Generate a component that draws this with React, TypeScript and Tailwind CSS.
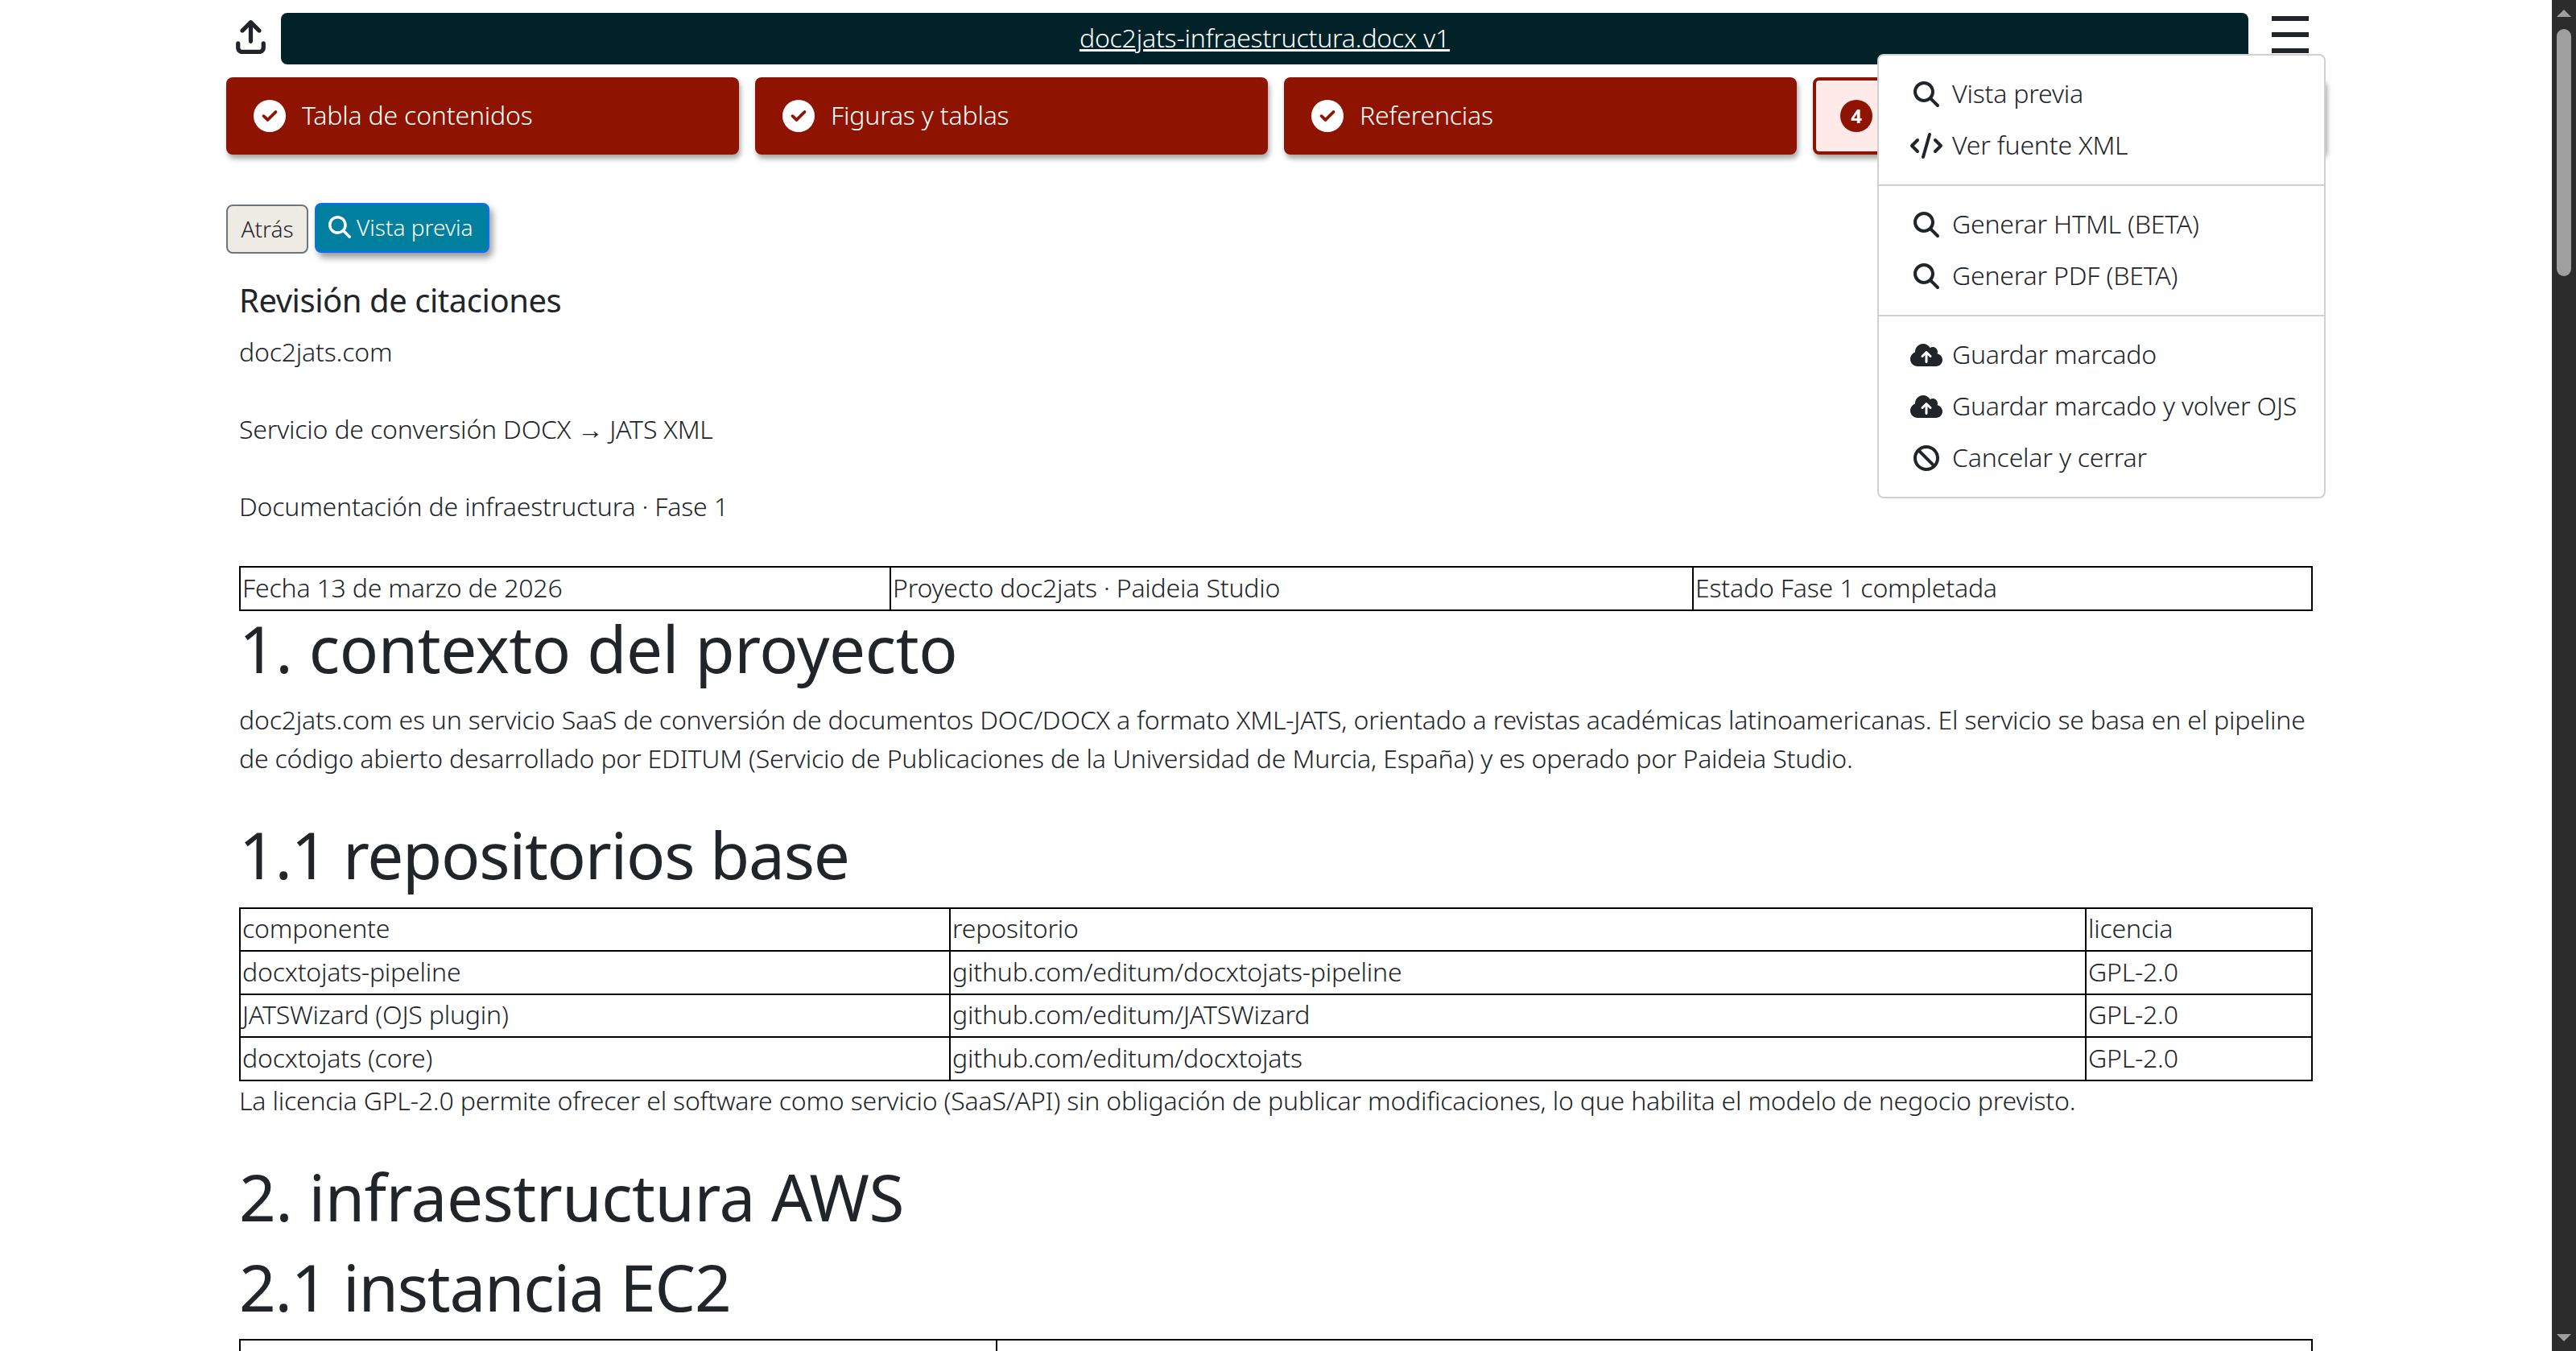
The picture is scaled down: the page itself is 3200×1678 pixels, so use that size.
import type { ReactNode } from 'react';
import {
  FaArrowUpFromBracket,
  FaBan,
  FaCircleCheck,
  FaCloudArrowUp,
  FaCode,
  FaMagnifyingGlass,
} from 'react-icons/fa6';

const steps = ['Tabla de contenidos', 'Figuras y tablas', 'Referencias'];

function StepDone({ label }: { label: string }) {
  return (
    <div className="flex h-24 items-center gap-5 rounded-lg bg-[#8e1300] pl-[34px] text-white shadow-[2px_5px_6px_rgba(0,0,0,0.35)]">
      <FaCircleCheck className="h-10 w-10 shrink-0" />
      <span className="pb-[2px]">{label}</span>
    </div>
  );
}

function MenuItem({ icon, label }: { icon: ReactNode; label: string }) {
  return (
    <div className="flex h-16 items-center gap-3 pl-[39px]">
      <span className="flex h-8 w-10 shrink-0 items-center justify-center">{icon}</span>
      <span className="pb-[2px] whitespace-nowrap">{label}</span>
    </div>
  );
}

function Cell({ width, children }: { width?: string; children?: ReactNode }) {
  return (
    <td className={`h-[53.5px] border-2 border-black px-[2px] pt-0 pb-[2px] align-middle ${width ?? ''}`}>
      {children}
    </td>
  );
}

const repos = [
  ['componente', 'repositorio', 'licencia'],
  ['docxtojats-pipeline', 'github.com/editum/docxtojats-pipeline', 'GPL-2.0'],
  ['JATSWizard (OJS plugin)', 'github.com/editum/JATSWizard', 'GPL-2.0'],
  ['docxtojats (core)', 'github.com/editum/docxtojats', 'GPL-2.0'],
];

export default function App() {
  return (
    <div className="flex h-screen overflow-hidden bg-white font-['Noto_Sans',sans-serif] text-[32px] leading-[48px] font-[350] tracking-[-0.19px] text-[#212529]">
      <main className="min-w-0 flex-1 overflow-hidden">
        <div className="relative mx-auto w-[2608px]">
          {/* top bar */}
          <div className="flex h-20 pt-4">
            <div className="w-[68px] pt-[9px] pl-3">
              <FaArrowUpFromBracket className="h-[42px] w-[37px]" />
            </div>
            <div className="flex h-16 flex-1 items-center justify-center rounded-lg bg-[#022229] pb-[2px] text-white underline">
              doc2jats-infraestructura.docx v1
            </div>
            <div className="flex w-24 flex-col gap-[14px] pt-1 pl-[29px]">
              <div className="h-[6px] w-[46px] bg-[#212529]" />
              <div className="h-[6px] w-[46px] bg-[#212529]" />
              <div className="h-[6px] w-[46px] bg-[#212529]" />
            </div>
          </div>

          {/* steps */}
          <div className="mt-4 grid grid-cols-4 gap-5">
            {steps.map((s) => (
              <StepDone key={s} label={s} />
            ))}
            <div className="flex h-24 items-center rounded-lg border-4 border-[#8e1300] bg-[#ffeaea] pl-[30px] shadow-[2px_5px_6px_rgba(0,0,0,0.35)]">
              <span className="flex h-10 w-10 shrink-0 items-center justify-center rounded-full bg-[#8e1300] text-[24px] font-bold text-white">
                4
              </span>
            </div>
          </div>

          {/* menu */}
          <div className="absolute top-[67px] right-0 z-10 w-[557px] rounded-lg border-2 border-[#d0d0d0] bg-white py-4">
            <MenuItem icon={<FaMagnifyingGlass className="h-8 w-8" />} label="Vista previa" />
            <MenuItem icon={<FaCode className="h-8 w-10" />} label="Ver fuente XML" />
            <div className="my-4 h-[2px] bg-[#d0d0d0]" />
            <MenuItem icon={<FaMagnifyingGlass className="h-8 w-8" />} label="Generar HTML (BETA)" />
            <MenuItem icon={<FaMagnifyingGlass className="h-8 w-8" />} label="Generar PDF (BETA)" />
            <div className="my-4 h-[2px] bg-[#d0d0d0]" />
            <MenuItem icon={<FaCloudArrowUp className="h-8 w-10" />} label="Guardar marcado" />
            <MenuItem icon={<FaCloudArrowUp className="h-8 w-10" />} label="Guardar marcado y volver OJS" />
            <MenuItem icon={<FaBan className="h-8 w-8" />} label="Cancelar y cerrar" />
          </div>

          {/* actions */}
          <div className="mt-[60px] flex items-start gap-2 text-[28px] tracking-normal">
            <button className="mt-[2px] h-[61px] w-[102px] rounded-lg border-2 border-[#6c757d] bg-[#eeebe5] pb-[2px] text-[#212529]">
              Atrás
            </button>
            <button className="flex h-[62px] w-[217px] items-center gap-[7px] rounded-lg border-2 border-[#0d6efd] bg-[#007f9e] pb-[2px] pl-[15px] text-white shadow-[4px_6px_8px_rgba(0,0,0,0.4)]">
              <FaMagnifyingGlass className="h-7 w-7" />
              Vista previa
            </button>
          </div>

          {/* document */}
          <div className="px-4">
            <h5 className="mt-9 mb-[14px] h-12 pb-1 text-[40px] leading-[44px] font-normal tracking-[-0.45px]">
              Revisión de citaciones
            </h5>
            <p className="mb-12">doc2jats.com</p>
            <p className="mb-12">Servicio de conversión DOCX → JATS XML</p>
            <p className="mb-[50px]">Documentación de infraestructura · Fase 1</p>

            <table className="w-full table-fixed border-collapse">
              <tbody>
                <tr>
                  <Cell width="w-[808px]">Fecha 13 de marzo de 2026</Cell>
                  <Cell width="w-[997px]">Proyecto doc2jats · Paideia Studio</Cell>
                  <Cell>Estado Fase 1 completada</Cell>
                </tr>
              </tbody>
            </table>

            <h1 className="mb-4 h-24 text-[80px] leading-[92px] font-normal tracking-[-0.4px]">
              1. contexto del proyecto
            </h1>
            <p className="mt-[-1px] mb-[49px]">
              doc2jats.com es un servicio SaaS de conversión de documentos DOC/DOCX a formato XML-JATS, orientado a
              revistas académicas latinoamericanas. El servicio se basa en el pipeline de código abierto desarrollado
              por EDITUM (Servicio de Publicaciones de la Universidad de Murcia, España) y es operado por Paideia
              Studio.
            </p>

            <h2 className="mb-4 h-24 text-[80px] leading-[92px] font-normal tracking-[-1.2px]">1.1 repositorios base</h2>
            <table className="w-full table-fixed border-collapse">
              <tbody>
                {repos.map((r) => (
                  <tr key={r[0]}>
                    <Cell width="w-[882px]">{r[0]}</Cell>
                    <Cell width="w-[1411px]">{r[1]}</Cell>
                    <Cell>{r[2]}</Cell>
                  </tr>
                ))}
              </tbody>
            </table>
            <p className="mb-12">
              La licencia GPL-2.0 permite ofrecer el software como servicio (SaaS/API) sin obligación de publicar
              modificaciones, lo que habilita el modelo de negocio previsto.
            </p>

            <h2 className="mb-4 h-24 text-[80px] leading-[94px] font-normal tracking-[-0.5px]">2. infraestructura AWS</h2>
            <h3 className="mb-4 h-24 text-[80px] leading-[94px] font-normal tracking-[-1.2px]">2.1 instancia EC2</h3>
            <table className="w-full table-fixed border-collapse">
              <tbody>
                <tr>
                  <Cell width="w-[940px]" />
                  <Cell />
                </tr>
              </tbody>
            </table>
          </div>
        </div>
      </main>

      {/* scrollbar */}
      <aside className="flex w-[30px] shrink-0 flex-col items-center bg-[#2c2c2c] pt-3 pb-3">
        <div className="h-0 w-0 border-x-[9px] border-b-[9px] border-x-transparent border-b-[#9f9f9f]" />
        <div className="mt-[15px] h-[307px] w-[18px] rounded-full bg-[#9f9f9f]" />
        <div className="mt-auto h-0 w-0 border-x-[9px] border-t-[9px] border-x-transparent border-t-[#9f9f9f]" />
      </aside>
    </div>
  );
}
